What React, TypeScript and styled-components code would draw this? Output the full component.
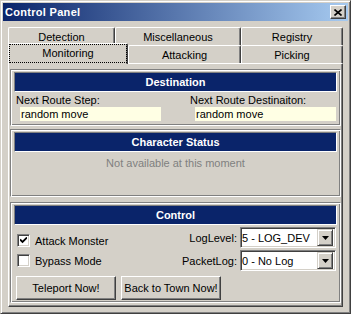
import styled, { createGlobalStyle } from "styled-components";

const GlobalStyle = createGlobalStyle`
  html, body {
    margin: 0;
    padding: 0;
    background: #d4d0c8;
  }
  body {
    font-family: "Liberation Sans", Arial, sans-serif;
    font-size: 11px;
    color: #000;
  }
`;

const Window = styled.div`
  width: 351px;
  height: 314px;
  box-sizing: border-box;
  background: #d4d0c8;
  border: 1px solid;
  border-color: #d4d0c8 #404040 #404040 #d4d0c8;
  box-shadow: inset 1px 1px #fff, inset -1px -1px #808080;
  padding: 2px;
  display: flex;
  flex-direction: column;
`;

const TitleBar = styled.div`
  height: 18px;
  flex: none;
  display: flex;
  align-items: center;
  padding: 0 2px;
  background: linear-gradient(to right, #0a246a, #a6caf0);
`;

const Title = styled.span`
  color: #fff;
  font-weight: bold;
  font-size: 11px;
  letter-spacing: 0.3px;
`;

const CloseButton = styled.div`
  margin-left: auto;
  width: 16px;
  height: 14px;
  box-sizing: border-box;
  background: #d4d0c8;
  border: 1px solid;
  border-color: #fff #404040 #404040 #fff;
  box-shadow: inset -1px -1px #808080;
  display: flex;
  align-items: center;
  justify-content: center;
`;

const Client = styled.div`
  flex: 1;
  display: flex;
  flex-direction: column;
  padding: 6px 5px 4px 5px;
`;

const TabRow = styled.div<{ $h: number }>`
  display: flex;
  height: ${(p) => p.$h}px;
  flex: none;
`;

const Tab = styled.div<{ $w: number; $active?: boolean }>`
  width: ${(p) => p.$w}px;
  height: ${(p) => (p.$active ? "21px" : "100%")};
  margin-top: ${(p) => (p.$active ? "-2px" : "0")};
  position: relative;
  z-index: ${(p) => (p.$active ? 2 : 1)};
  box-sizing: border-box;
  background: #d4d0c8;
  border-top: 1px solid #fff;
  border-left: 1px solid #fff;
  border-right: 1px solid #404040;
  border-radius: 2px 2px 0 0;
  box-shadow: inset -1px 0 #808080;
  display: flex;
  align-items: center;
  justify-content: center;
  padding-bottom: ${(p) => (p.$active ? "2px" : "0")};
  outline: ${(p) => (p.$active ? "1px dotted #000" : "none")};
  outline-offset: -2px;
`;

const TabPanel = styled.div`
  flex: 1;
  box-sizing: border-box;
  border: 1px solid;
  border-color: #fff #404040 #404040 #fff;
  box-shadow: inset -1px -1px #808080;
  padding: 5px 1px 2px 1px;
  display: flex;
  flex-direction: column;
  gap: 3px;
`;

const Group = styled.div<{ $h: number; $gapTop?: number }>`
  height: ${(p) => p.$h}px;
  margin-top: ${(p) => p.$gapTop ?? 0}px;
  box-sizing: border-box;
  border: 1px solid;
  border-color: #808080 #fff #fff #808080;
  box-shadow: inset 1px 1px #fff, inset -1px -1px #808080;
  padding: 2px 3px 0 3px;
  display: flex;
  flex-direction: column;
`;

const Header = styled.div`
  height: 20px;
  flex: none;
  box-sizing: border-box;
  background: #0a246a;
  border: 1px solid;
  border-color: #808080 #fff #fff #808080;
  color: #fff;
  font-weight: bold;
  display: flex;
  align-items: center;
  justify-content: center;
`;

const FieldGrid = styled.div`
  display: grid;
  grid-template-columns: 174px 1fr;
  padding-top: 2px;
`;

const Field = styled.div<{ $indent: number }>`
  display: flex;
  flex-direction: column;
  padding-left: 2px;

  & > div {
    margin-left: ${(p) => p.$indent}px;
  }
`;

const FieldLabel = styled.span`
  line-height: 13px;
  height: 13px;
`;

const ReadOnlyBox = styled.div`
  width: 141px;
  height: 14px;
  background: #ffffe4;
  line-height: 14px;
  padding-left: 1px;
  box-sizing: border-box;
`;

const Placeholder = styled.div`
  color: #808080;
  text-align: center;
  line-height: 13px;
  margin-top: 5px;
`;

const ControlBody = styled.div`
  display: flex;
  padding-top: 2px;
`;

const CheckList = styled.div`
  display: flex;
  flex-direction: column;
  gap: 7px;
  padding: 7px 0 0 3px;
`;

const CheckRow = styled.label`
  display: flex;
  align-items: center;
  gap: 5px;
  height: 13px;
`;

const CheckBox = styled.span`
  width: 13px;
  height: 13px;
  box-sizing: border-box;
  background: #fff;
  border: 1px solid;
  border-color: #808080 #fff #fff #808080;
  box-shadow: inset 1px 1px #404040, inset -1px -1px #d4d0c8;
  display: flex;
  align-items: center;
  justify-content: center;
`;

const SelectList = styled.div`
  margin-left: auto;
  margin-right: 1px;
  display: flex;
  flex-direction: column;
  gap: 2px;
`;

const SelectRow = styled.div`
  display: flex;
  align-items: center;
  justify-content: flex-end;
  gap: 3px;
`;

const Combo = styled.div`
  width: 96px;
  height: 21px;
  box-sizing: border-box;
  background: #fff;
  border: 1px solid;
  border-color: #808080 #fff #fff #808080;
  box-shadow: inset 1px 1px #404040, inset -1px -1px #d4d0c8;
  padding: 2px;
  display: flex;
  align-items: center;
`;

const ComboText = styled.span`
  flex: 1;
  padding-left: 0;
  margin-left: -1px;
`;

const ComboButton = styled.span`
  width: 16px;
  height: 17px;
  margin-right: -0px;
  box-sizing: border-box;
  background: #d4d0c8;
  border: 1px solid;
  border-color: #d4d0c8 #404040 #404040 #d4d0c8;
  box-shadow: inset 1px 1px #fff, inset -1px -1px #808080;
  display: flex;
  align-items: center;
  justify-content: center;
`;

const ButtonRow = styled.div`
  display: flex;
  gap: 5px;
  padding-left: 2px;
  margin-top: 5px;
`;

const PushButton = styled.button`
  width: 100px;
  height: 24px;
  box-sizing: border-box;
  background: #d4d0c8;
  border: 1px solid;
  border-color: #fff #404040 #404040 #fff;
  box-shadow: inset -1px -1px #808080;
  font-family: "Liberation Sans", Arial, sans-serif;
  font-size: 11px;
  color: #000;
  padding: 0;
`;

const Arrow = () => (
  <svg width="7" height="4" viewBox="0 0 7 4">
    <path d="M0 0h7L3.5 4z" fill="#000" />
  </svg>
);

const Check = () => (
  <svg width="7" height="7" viewBox="0 0 7 7">
    <path d="M0 2.5l2.5 2.5L7 0.5" stroke="#000" strokeWidth="1.8" fill="none" />
  </svg>
);

const CloseX = () => (
  <svg width="8" height="7" viewBox="0 0 8 7">
    <path d="M0.5 0.5l7 6M7.5 0.5l-7 6" stroke="#000" strokeWidth="1.6" />
  </svg>
);

const App = () => {
  return (
    <>
      <GlobalStyle />
      <Window>
        <TitleBar>
          <Title>Control Panel</Title>
          <CloseButton>
            <CloseX />
          </CloseButton>
        </TitleBar>
        <Client>
          <TabRow $h={18}>
            <Tab $w={107}>Detection</Tab>
            <Tab $w={126}>Miscellaneous</Tab>
            <Tab $w={102}>Registry</Tab>
          </TabRow>
          <TabRow $h={18}>
            <Tab $w={120} $active>
              Monitoring
            </Tab>
            <Tab $w={113}>Attacking</Tab>
            <Tab $w={102}>Picking</Tab>
          </TabRow>
          <TabPanel>
            <Group $h={57}>
              <Header>Destination</Header>
              <FieldGrid>
                <Field $indent={4}>
                  <FieldLabel>Next Route Step:</FieldLabel>
                  <ReadOnlyBox>random move</ReadOnlyBox>
                </Field>
                <Field $indent={5}>
                  <FieldLabel>Next Route Destinaiton:</FieldLabel>
                  <ReadOnlyBox>random move</ReadOnlyBox>
                </Field>
              </FieldGrid>
            </Group>
            <Group $h={68}>
              <Header>Character Status</Header>
              <Placeholder>Not available at this moment</Placeholder>
            </Group>
            <Group $h={101} $gapTop={2}>
              <Header>Control</Header>
              <ControlBody>
                <CheckList>
                  <CheckRow>
                    <CheckBox>
                      <Check />
                    </CheckBox>
                    Attack Monster
                  </CheckRow>
                  <CheckRow>
                    <CheckBox />
                    Bypass Mode
                  </CheckRow>
                </CheckList>
                <SelectList>
                  <SelectRow>
                    LogLevel:
                    <Combo>
                      <ComboText>5 - LOG_DEV</ComboText>
                      <ComboButton>
                        <Arrow />
                      </ComboButton>
                    </Combo>
                  </SelectRow>
                  <SelectRow>
                    PacketLog:
                    <Combo>
                      <ComboText>0 - No Log</ComboText>
                      <ComboButton>
                        <Arrow />
                      </ComboButton>
                    </Combo>
                  </SelectRow>
                </SelectList>
              </ControlBody>
              <ButtonRow>
                <PushButton>Teleport Now!</PushButton>
                <PushButton>Back to Town Now!</PushButton>
              </ButtonRow>
            </Group>
          </TabPanel>
        </Client>
      </Window>
    </>
  );
};

export default App;
